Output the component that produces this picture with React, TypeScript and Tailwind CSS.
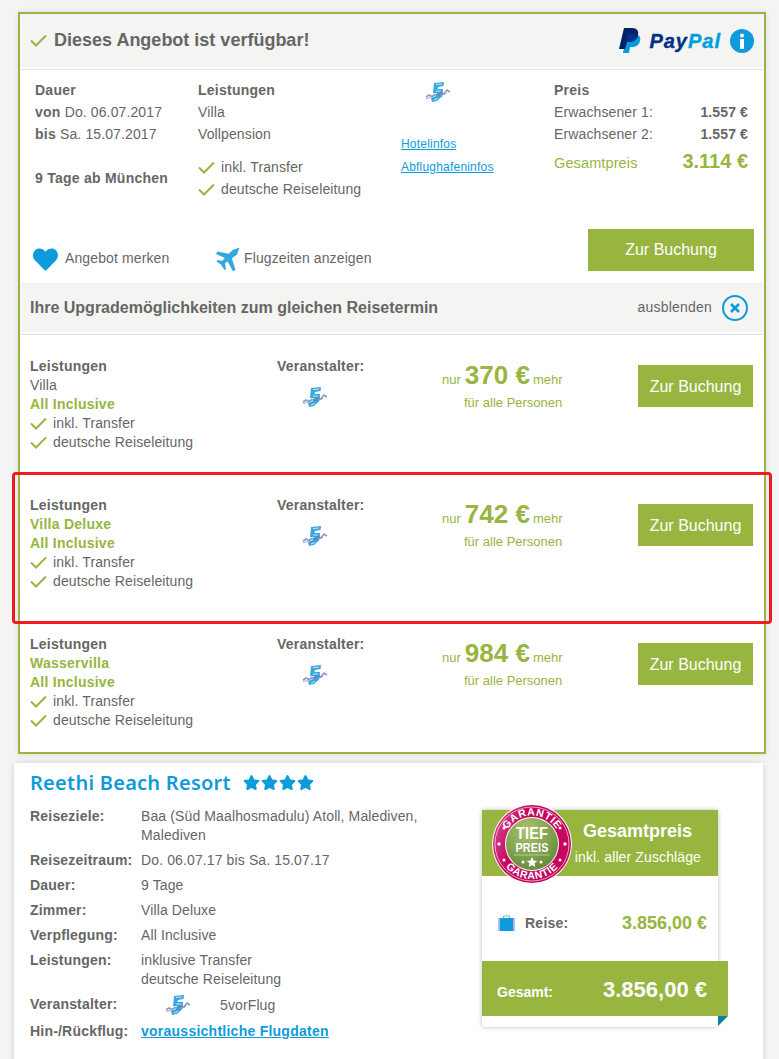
import { FaHeart, FaStar } from "react-icons/fa";

const Check = ({ className = "h-[13px] w-[17px]" }: { className?: string }) => (
  <svg viewBox="0 0 17 13" className={className} fill="none">
    <path d="M1 6.5 L6 11.5 L16 1.5" stroke="#97b53f" strokeWidth="2" />
  </svg>
);

// small 5vorFlug mark
const OperatorLogo = () => (
  <svg viewBox="0 0 26 20" className="h-[20px] w-[26px]">
    <path d="M9 1 L19 0 L18.5 4 L13 5 L12.5 7 L18 7 L17.5 14 L12 19 L7 20 L6 16 L11 14 L12 11 L8 11 Z" fill="#3aa7e0" />
    <path d="M11 2.5 L17 2 M11 9 L16 9 M9 18 L13 16.5" stroke="#bfe4f7" strokeWidth="1" />
    <path d="M1 15 L4 13 L7 14.5 L10 12.5 L13 13.5 L16 10.5 L19 12 L22 8 L25 10" stroke="#6d7fb0" strokeWidth="1.6" fill="none" opacity="0.8" />
    <path d="M1 16.5 L6 15.5 M15 13 L21 11.5" stroke="#8b99c2" strokeWidth="1" opacity="0.8" />
  </svg>
);

const PayPalMark = () => (
  <svg viewBox="0 0 22 25" className="h-[25px] w-[22px]">
    <path d="M8 6 H15 C20 6 22 9 21 13 C20 17 17 19 13 19 H11 L10 25 H4 Z" fill="#009cde" />
    <path d="M5 0 H13 C18 0 20 3 19 7 C18 12 14 14 10 14 H8 L6 21 H0 Z" fill="#012169" />
    <path d="M7.5 6 H15 C17 6 18.4 6.5 19.2 7.5 C18 12 14 14 10 14 H8 Z" fill="#003087" />
  </svg>
);

const InfoIcon = () => (
  <svg viewBox="0 0 24 24" className="ml-[9px] h-[24px] w-[24px]">
    <circle cx="12" cy="12" r="12" fill="#0d9bdc" />
    <circle cx="12" cy="6.5" r="2" fill="#fff" />
    <rect x="10" y="10" width="4" height="10" fill="#fff" />
  </svg>
);

const PlaneIcon = () => (
  <svg viewBox="0 0 24 24" className="h-[24px] w-[24px]">
    <g fill="#2fa9e0">
      <path d="M23.5 0.5 L16.5 3 L5 15 L7.5 17.5 L21 7.5 Z" />
      <path d="M14 7 L1.5 4.5 L0 7 L10 11.5 Z" />
      <path d="M15.5 10 L19.5 23 L17 24.5 L11.5 14 Z" />
      <path d="M7 14 L1.5 13 L0.5 14.5 L5 17.5 L8.5 23 L10 22 L9 16.5 Z" />
    </g>
  </svg>
);

const SuitcaseIcon = () => (
  <svg viewBox="0 0 17 17" className="h-[17px] w-[17px]">
    <path d="M5.5 3 V1 H11.5 V3" fill="none" stroke="#5db9e8" strokeWidth="1" />
    <rect x="0" y="3" width="17" height="13" fill="#8fd0f0" />
    <rect x="2" y="3" width="13" height="13" fill="#0d9bdc" />
    <rect x="1" y="3" width="1" height="13" fill="#c9a6e8" />
    <rect x="15" y="3" width="1" height="13" fill="#c9a6e8" />
  </svg>
);

const PriceBadge = () => (
  <svg viewBox="0 0 80 80" className="h-[80px] w-[80px]">
    <defs>
      <path id="ringTop" d="M 11.5 40 A 28.5 28.5 0 0 1 68.5 40" />
      <path id="ringBottom" d="M 5 40 A 35 35 0 0 0 75 40" />
      <radialGradient id="core" cx="40%" cy="25%" r="85%">
        <stop offset="0" stopColor="#a9c46a" />
        <stop offset="1" stopColor="#5f8536" />
      </radialGradient>
      <linearGradient id="ring" x1="0" y1="0" x2="1" y2="0.4">
        <stop offset="0" stopColor="#e0559a" />
        <stop offset="0.4" stopColor="#c4085f" />
        <stop offset="1" stopColor="#c4085f" />
      </linearGradient>
    </defs>
    <circle cx="40" cy="40" r="40" fill="#fff" />
    <circle cx="40" cy="40" r="39" fill="url(#ring)" />
    <circle cx="40" cy="40" r="37" fill="none" stroke="#fff" strokeWidth="0.6" />
    <circle cx="40" cy="40" r="27" fill="#fff" />
    <circle cx="40" cy="40" r="26" fill="url(#core)" />
    <text fontSize="10.5" fontWeight="700" fill="#fff" fontFamily="'Liberation Sans', sans-serif" letterSpacing="0.6">
      <textPath href="#ringTop" startOffset="50%" textAnchor="middle">GARANTIE</textPath>
    </text>
    <text fontSize="10.5" fontWeight="700" fill="#fff" fontFamily="'Liberation Sans', sans-serif" letterSpacing="0.6">
      <textPath href="#ringBottom" startOffset="50%" textAnchor="middle">GARANTIE</textPath>
    </text>
    <text x="40" y="35" textAnchor="middle" fontSize="17" fontWeight="700" fill="#fff" fontFamily="'Liberation Sans', sans-serif" textLength="32" lengthAdjust="spacingAndGlyphs">TIEF</text>
    <text x="40" y="48" textAnchor="middle" fontSize="13" fontWeight="700" fill="#fff" fontFamily="'Liberation Sans', sans-serif" textLength="33" lengthAdjust="spacingAndGlyphs">PREIS</text>
    <path d="M22 51 H58" stroke="#dfe9c8" strokeWidth="0.6" />
    <path d="M40 53 L41.6 56.6 L45.3 57 L42.5 59.3 L43.3 63 L40 61.1 L36.7 63 L37.5 59.3 L34.7 57 L38.4 56.6 Z" fill="#fff" />
    <circle cx="31" cy="58" r="1.5" fill="#fff" />
    <circle cx="49" cy="58" r="1.5" fill="#fff" />
    <g fill="#fff">
      <circle cx="7" cy="40" r="1.7" />
      <circle cx="73" cy="40" r="1.7" />
      <circle cx="12" cy="24" r="1.5" />
      <circle cx="68" cy="24" r="1.5" />
      <circle cx="12" cy="56" r="1.5" />
      <circle cx="68" cy="56" r="1.5" />
    </g>
  </svg>
);

const BookButton = ({ className }: { className: string }) => (
  <button className={`flex h-[42px] items-center justify-center bg-[#97b53f] text-[16px] tracking-normal text-white ${className}`}>
    Zur Buchung
  </button>
);

interface UpgradeRowProps {
  room: string;
  roomGreen?: boolean;
  price: string;
}

const UpgradeRow = ({ room, roomGreen, price }: UpgradeRowProps) => (
  <div className="flex h-[139px] pl-[10px] pt-[22px] text-[14px] leading-[19px]">
    <div className="w-[247px]">
      <p className="font-bold tracking-[0.25px]">Leistungen</p>
      <p className={roomGreen ? "font-bold tracking-[0.25px] text-[#97b53f]" : ""}>{room}</p>
      <p className="font-bold tracking-[0.25px] text-[#97b53f]">All Inclusive</p>
      <p className="flex items-center gap-[6px]"><Check />inkl. Transfer</p>
      <p className="flex items-center gap-[6px]"><Check />deutsche Reiseleitung</p>
    </div>
    <div className="w-[165px]">
      <p className="font-bold tracking-[0.2px]">Veranstalter:</p>
      <div className="ml-[25px] mt-[11px]"><OperatorLogo /></div>
    </div>
    <div className="w-[196px] tracking-normal text-[#97b53f]">
      <p className="mt-[9px] flex h-[30px] items-baseline gap-[4px] whitespace-pre text-[13px]">
        <span>nur</span>
        <span className="text-[26px] font-bold">{price} €</span>
        <span className="-ml-[1px]">mehr</span>
      </p>
      <p className="-mt-[3px] ml-[22px] text-[13px]">für alle Personen</p>
    </div>
    <BookButton className="mt-[8px] w-[115px]" />
  </div>
);

const InfoRow = ({ label, children, className = "" }: { label: string; children: React.ReactNode; className?: string }) => (
  <div className={`flex ${className}`}>
    <span className="w-[111px] shrink-0 font-bold tracking-[0.2px]">{label}</span>
    <div>{children}</div>
  </div>
);

export default function App() {
  return (
    <div className="relative h-[1059px] overflow-hidden bg-[#f4f4f4] pt-[12px] font-['Liberation_Sans',Arial,sans-serif] tracking-[0.12px] text-[#666]">
      {/* Angebot */}
      <div className="ml-[18px] h-[742px] w-[748px] border-2 border-[#97b53f] bg-white shadow-[0_0_6px_rgba(0,0,0,0.1)]">
        <div className="flex h-[53px] items-center bg-[#f4f4f2] pl-[10px] pr-[10px]">
          <Check className="h-[13px] w-[17px]" />
          <span className="ml-[7px] text-[18px] font-bold tracking-normal">Dieses Angebot ist verfügbar!</span>
          <div className="ml-auto flex items-center">
            <PayPalMark />
            <span className="ml-[8px] text-[20px] font-bold italic tracking-[1px] text-[#003087] [-webkit-text-stroke:0.4px]">
              Pay<span className="text-[#009cde]">Pal</span>
            </span>
            <InfoIcon />
          </div>
        </div>
        <div className="mt-[2px] h-px bg-[#e0e0e0]" />

        <div className="flex h-[159px] pl-[15px] pt-[9px] text-[14px] leading-[22px]">
          <div className="w-[163px]">
            <p className="font-bold tracking-[0.25px]">Dauer</p>
            <p><b className="tracking-[0.25px]">von</b> Do. 06.07.2017</p>
            <p><b className="tracking-[0.25px]">bis</b> Sa. 15.07.2017</p>
            <p className="mt-[22px] font-bold tracking-[0.25px]">9 Tage ab München</p>
          </div>
          <div className="w-[203px]">
            <p className="font-bold tracking-[0.25px]">Leistungen</p>
            <p>Villa</p>
            <p>Vollpension</p>
            <p className="mt-[11px] flex items-center gap-[6px]"><Check />inkl. Transfer</p>
            <p className="flex items-center gap-[6px]"><Check />deutsche Reiseleitung</p>
          </div>
          <div className="w-[153px] text-[12px] tracking-[0.2px] text-[#0d9bdc] underline">
            <div className="ml-[24px] h-[44px] pt-[3px]"><OperatorLogo /></div>
            <p className="mt-[10px] leading-[23px]">Hotelinfos</p>
            <p className="leading-[23px]">Abflughafeninfos</p>
          </div>
          <div className="w-[194px]">
            <p className="font-bold tracking-[0.25px]">Preis</p>
            <p className="flex justify-between"><span>Erwachsener 1:</span><b>1.557 €</b></p>
            <p className="flex justify-between"><span>Erwachsener 2:</span><b>1.557 €</b></p>
            <p className="mt-[3px] flex items-center justify-between text-[#97b53f]">
              <span className="pt-[4px] text-[14.5px]">Gesamtpreis</span><b className="text-[20px] tracking-normal">3.114 €</b>
            </p>
          </div>
        </div>

        <div className="flex h-[42px] items-center pl-[13px] text-[14px]">
          <FaHeart className="mt-[18px] h-[25px] w-[25px] text-[#0d9bdc]" />
          <span className="ml-[7px] mt-[16px] w-[151px]">Angebot merken</span>
          <span className="mt-[18px]"><PlaneIcon /></span>
          <span className="ml-[4px] mt-[16px]">Flugzeiten anzeigen</span>
          <BookButton className="ml-auto mr-[10px] w-[166px]" />
        </div>

        <div className="mt-[12px] flex h-[49px] items-center bg-[#f4f4f2] pl-[10px] pr-[16px]">
          <span className="text-[16px] font-bold tracking-normal">Ihre Upgrademöglichkeiten zum gleichen Reisetermin</span>
          <span className="ml-auto text-[14px] tracking-[0.2px]">ausblenden</span>
          <span className="ml-[10px] flex h-[26px] w-[26px] items-center justify-center rounded-full border-2 border-[#0d9bdc]">
            <svg viewBox="0 0 12 12" className="h-[12px] w-[12px]">
              <path d="M2 2 L10 10 M10 2 L2 10" stroke="#0d9bdc" strokeWidth="2.6" />
            </svg>
          </span>
        </div>
        <div className="mt-[2px] h-px bg-[#e0e0e0]" />

        <UpgradeRow room="Villa" price="370" />
        <UpgradeRow room="Villa Deluxe" roomGreen price="742" />
        <UpgradeRow room="Wasservilla" roomGreen price="984" />
      </div>

      {/* Hervorhebung */}
      <div className="absolute left-[12px] top-[472px] h-[152px] w-[760px] rounded-[4px] border-[3px] border-[#ed1c24]" />

      {/* Hotel */}
      <div className="ml-[14px] mt-[9px] flex h-[400px] w-[749px] bg-white pl-[16px] shadow-[0_0_6px_rgba(0,0,0,0.15)]">
        <div className="w-[452px] text-[14px] leading-[19px]">
          <div className="flex h-[38px] items-center">
            <h1 className="font-['Noto_Sans',sans-serif] text-[20px] font-semibold tracking-[0.25px] text-[#0d9bdc]">Reethi Beach Resort</h1>
            <div className="ml-[12px] flex gap-px text-[#0d9bdc]">
              <FaStar className="h-[17px] w-[17px]" />
              <FaStar className="h-[17px] w-[17px]" />
              <FaStar className="h-[17px] w-[17px]" />
              <FaStar className="h-[17px] w-[17px]" />
            </div>
          </div>
          <div className="mt-[6px] flex flex-col gap-[6px]">
            <InfoRow label="Reiseziele:">Baa (Süd Maalhosmadulu) Atoll, Malediven,<br />Malediven</InfoRow>
            <InfoRow label="Reisezeitraum:">Do. 06.07.17 bis Sa. 15.07.17</InfoRow>
            <InfoRow label="Dauer:">9 Tage</InfoRow>
            <InfoRow label="Zimmer:">Villa Deluxe</InfoRow>
            <InfoRow label="Verpflegung:">All Inclusive</InfoRow>
            <InfoRow label="Leistungen:">inklusive Transfer<br />deutsche Reiseleitung</InfoRow>
            <InfoRow label="Veranstalter:">
              <div className="flex items-center">
                <span className="ml-[24px]"><OperatorLogo /></span>
                <span className="ml-[29px]">5vorFlug</span>
              </div>
            </InfoRow>
            <InfoRow label="Hin-/Rückflug:" className="mt-[1px]">
              <a className="font-bold tracking-[0.25px] text-[#0d9bdc] underline">voraussichtliche Flugdaten</a>
            </InfoRow>
          </div>
        </div>

        <div className="relative mt-[47px] h-[217px] w-[236px] rounded-[4px] bg-white shadow-[0_0_5px_rgba(0,0,0,0.25)]">
          <div className="absolute left-[10px] -top-[6px]"><PriceBadge /></div>
          <div className="flex h-[66px] flex-col items-end bg-[#97b53f] pr-[17px] text-white">
            <span className="mr-[9px] mt-[11px] text-[18px] font-bold leading-[20px] tracking-normal">Gesamtpreis</span>
            <span className="mt-[6px] text-[14px] leading-[20px]">inkl. aller Zuschläge</span>
          </div>
          <div className="flex h-[85px] items-center pl-[16px] pr-[11px] pt-[10px] text-[14px]">
            <SuitcaseIcon />
            <span className="ml-[10px] font-bold tracking-[0.25px]">Reise:</span>
            <span className="ml-auto text-[18px] font-bold tracking-normal text-[#97b53f]">3.856,00 €</span>
          </div>
          <div className="relative -mr-[10px] flex h-[55px] items-center bg-[#97b53f] pl-[15px] pr-[21px] pt-[2px] font-bold tracking-normal text-white">
            <span className="mt-[6px] text-[14px]">Gesamt:</span>
            <span className="ml-auto text-[22px]">3.856,00 €</span>
            <svg viewBox="0 0 10 10" className="absolute right-0 top-[55px] h-[10px] w-[10px]">
              <path d="M0 10 L10 0 H0 Z" fill="#0a7ea4" />
            </svg>
          </div>
        </div>
      </div>
    </div>
  );
}
